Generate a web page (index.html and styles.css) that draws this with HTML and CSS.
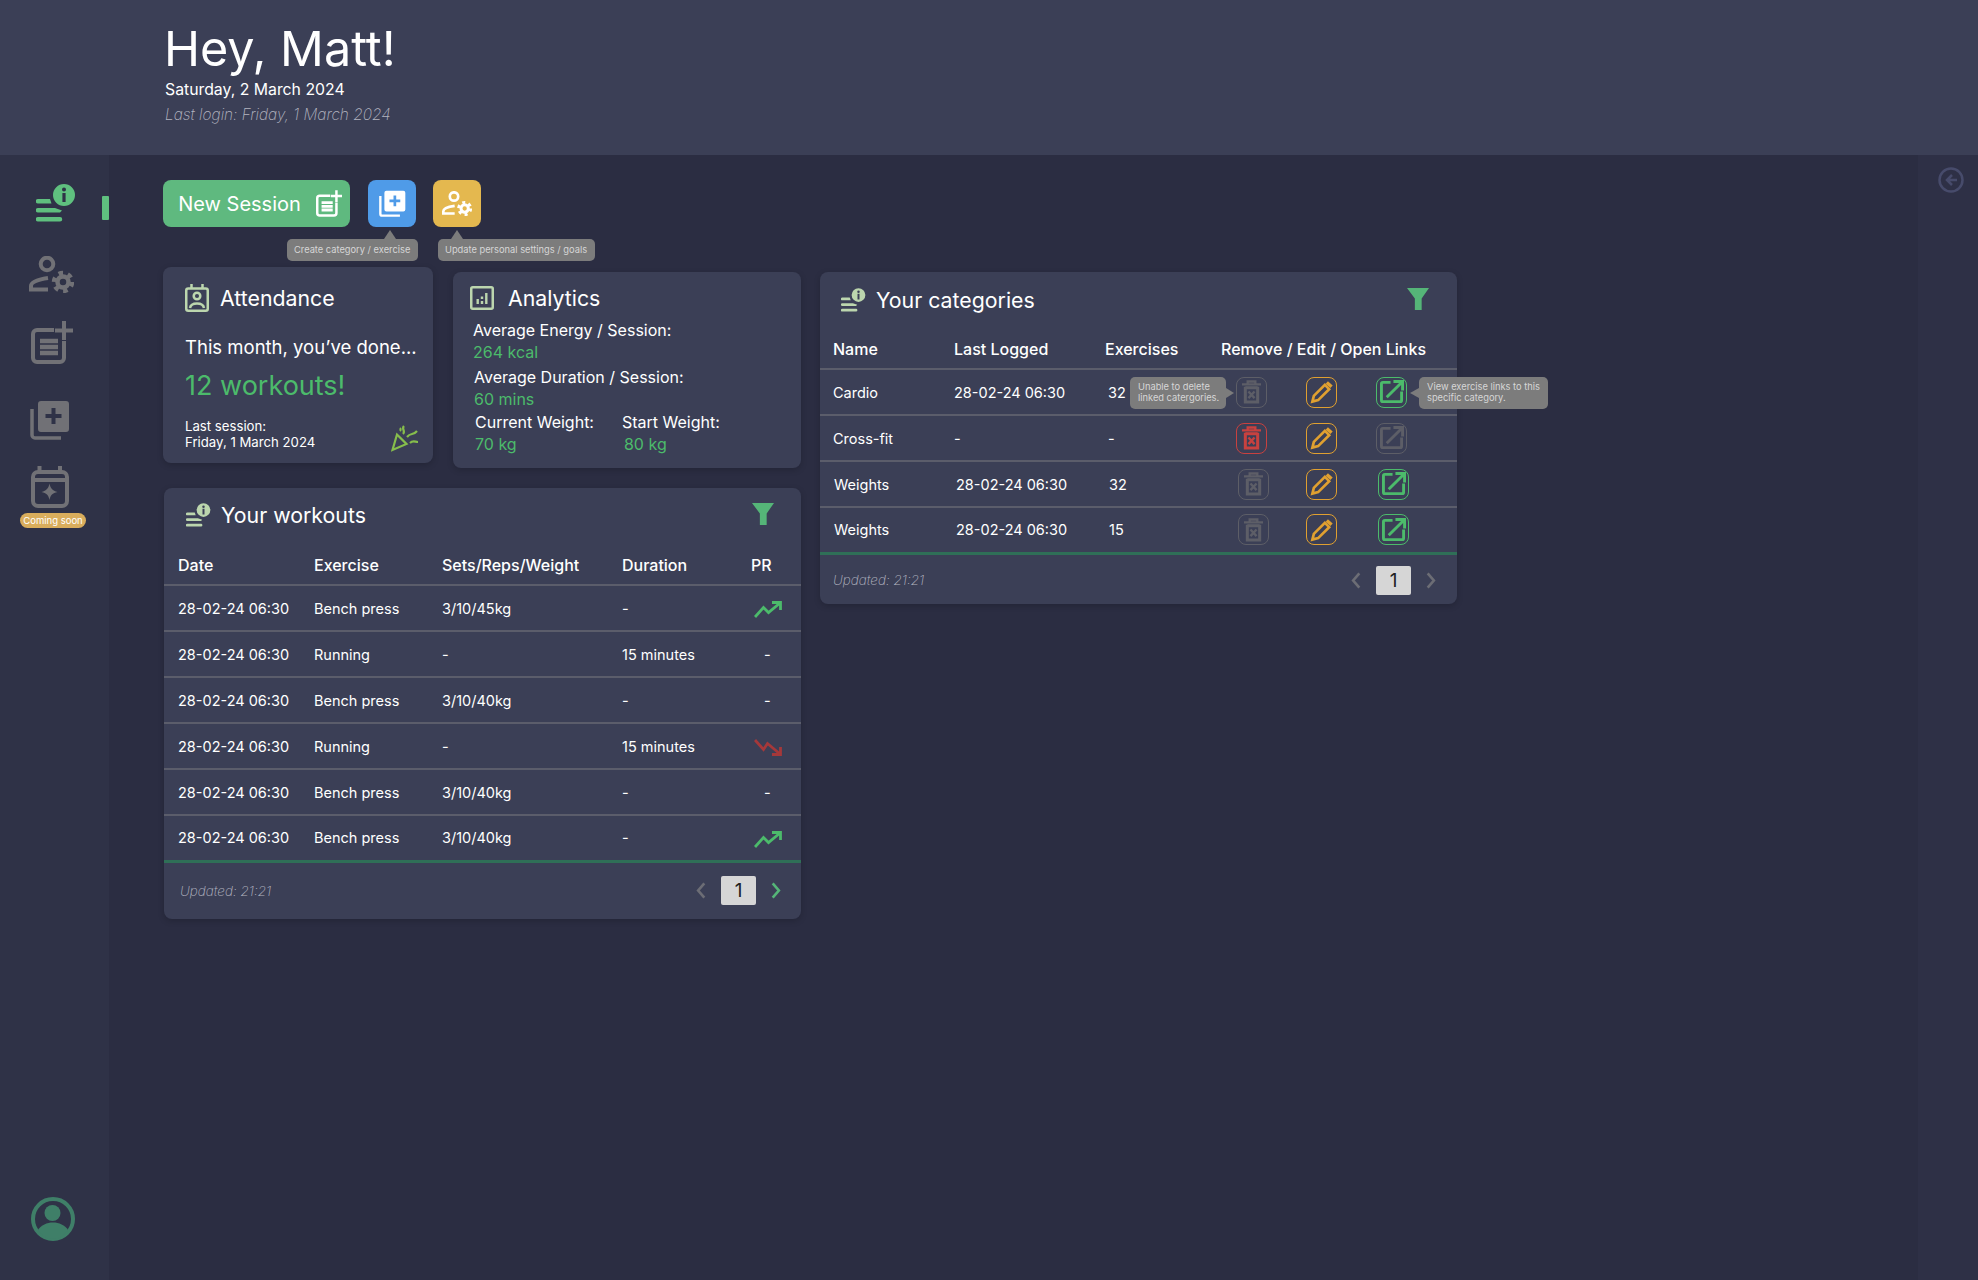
FILE: index.html
```html
<!DOCTYPE html>
<html lang="en">

<head>
  <meta charset="UTF-8">
  <meta name="viewport" content="width=device-width, initial-scale=1.0">
  <title>Dashboard</title>
  <link rel="stylesheet" href="styles.css">
</head>

<body>
  <!-- icon sprite -->
  <svg class="sprite" xmlns="http://www.w3.org/2000/svg">
    <symbol id="i-list" viewBox="0 0 40 38">
      <path fill="currentColor" fill-rule="evenodd" d="M28 0a11 11 0 1 1 0 22a11 11 0 0 1 0-22zM26.400 9v9h3.200V9zM28 3.600a2 2 0 1 0 0 4a2 2 0 0 0 0-4z"/>
      <path fill="currentColor" d="M2 15h12l1.500 4.500H2a2.250 2.250 0 0 1 0-4.500zM2 24h17l7 2.500l-2 2H2a2.250 2.250 0 0 1 0-4.500zM2 33h22a2 2 0 0 1 0 4.500H2a2.250 2.250 0 0 1 0-4.500z"/>
    </symbol>
    <symbol id="i-user-gear" viewBox="0 0 45 37">
      <g fill="none" stroke="currentColor">
        <circle cx="18" cy="8" r="6.300" stroke-width="4"/>
        <path stroke-width="4" d="M19 22C9 23.500 2 26 2 30v3.500h17"/>
        <circle cx="34" cy="26" r="5.500" stroke-width="4.500"/>
        <circle cx="34" cy="26" r="9" stroke-width="4.500" stroke-dasharray="4.500 4.920"/>
      </g>
    </symbol>
    <symbol id="i-note-plus" viewBox="0 0 42 43">
      <g fill="none" stroke="currentColor" stroke-width="4">
        <path d="M23 9H6a4 4 0 0 0-4 4v24a4 4 0 0 0 4 4h23a4 4 0 0 0 4-4V20"/>
        <path d="M33 0v19M24 9.500h18"/>
        <path stroke-width="4.500" d="M9 20h18M9 26h18M9 32h18"/>
      </g>
    </symbol>
    <symbol id="i-library" viewBox="0 0 40 40">
      <path fill="currentColor" fill-rule="evenodd" d="M11 1h25a3 3 0 0 1 3 3v25a3 3 0 0 1-3 3H11a3 3 0 0 1-3-3V4a3 3 0 0 1 3-3zM21.500 8v6h-6v4h6v6h4v-6h6v-4h-6V8z"/>
      <path fill="none" stroke="currentColor" stroke-width="3.500" d="M2 9v26a3 3 0 0 0 3 3h26"/>
    </symbol>
    <symbol id="i-calendar" viewBox="0 0 38 42">
      <g fill="none" stroke="currentColor" stroke-width="4">
        <rect x="2" y="6" width="34" height="34" rx="5"/>
        <path d="M2 14h34M8.500 0v6M29 0v6"/>
      </g>
      <path fill="currentColor" d="M18.500 17.500c1 5 3 7 8 8.500c-5 1-7 3-8 8c-1-5-3-7-8-8c5-1.500 7-3.500 8-8.500z"/>
    </symbol>
    <symbol id="i-avatar" viewBox="0 0 44 44">
      <circle cx="22" cy="22" r="20" fill="none" stroke="currentColor" stroke-width="4"/>
      <circle cx="21.500" cy="16" r="8" fill="currentColor"/>
      <path fill="currentColor" d="M7 33c3-5 9-7.500 15-7.500s12 2.500 15 7.500c-3 5-9 9-15 9s-12-4-15-9z"/>
    </symbol>
    <symbol id="i-back" viewBox="0 0 26 26">
      <circle cx="13" cy="13" r="11.500" fill="none" stroke="currentColor" stroke-width="2.500"/>
      <path fill="none" stroke="currentColor" stroke-width="2.500" d="M19 13h-9M14 8l-5 5l5 5"/>
    </symbol>
    <symbol id="i-attendance" viewBox="0 0 24 28">
      <g fill="none" stroke="currentColor" stroke-width="2.500">
        <rect x="1.250" y="4.500" width="21.500" height="22.250" rx="2"/>
        <path d="M6.500 0v4.500M17.500 0v4.500"/>
        <circle cx="12" cy="12" r="3.300"/>
        <path d="M5 24c1-6 13-6 14 0"/>
      </g>
    </symbol>
    <symbol id="i-analytics" viewBox="0 0 24 24">
      <rect x="1.250" y="1.250" width="21.500" height="21.500" rx="1.500" fill="none" stroke="currentColor" stroke-width="2.500"/>
      <path fill="currentColor" d="M6.500 13h2.400v5H6.500zM10.800 15h2.400v3h-2.400zM10.800 10.500h2.400v2.500h-2.400zM15.100 7h2.400v11h-2.400z"/>
    </symbol>
    <symbol id="i-party" viewBox="0 0 28 28">
      <g fill="none" stroke="currentColor" stroke-width="2.200">
        <path d="M1.500 26L6 10.500L15.500 20z"/>
        <path d="M12 10c3-3-2-5 1-8M16 13c4-5 6-1 10-6M19 19c3-3 5-1 8-1M9 7c1-1 0-2 1-3"/>
      </g>
    </symbol>
    <symbol id="i-funnel" viewBox="0 0 21 21">
      <path fill="currentColor" d="M0 0h21l-7 10v11H7.500V10z"/>
    </symbol>
    <symbol id="i-up" viewBox="0 0 28 17">
      <path fill="none" stroke="currentColor" stroke-width="2.800" d="M1 16l8.500-9.500l5 5L26 2M18 1.500h8.500V9"/>
    </symbol>
    <symbol id="i-down" viewBox="0 0 28 17">
      <path fill="none" stroke="currentColor" stroke-width="2.800" d="M1 1l8.500 9.500l4-6L26 15M18 15.500h8.500V8"/>
    </symbol>
    <symbol id="i-trash" viewBox="0 0 20 25">
      <g fill="none" stroke="currentColor">
        <path stroke-width="2.500" d="M0 4.500h20M6 4.500V1.500h8v3"/>
        <path stroke-width="3.200" d="M3.500 7v16h13V7"/>
        <path stroke-width="3.200" d="M3.500 8h13"/>
        <path stroke-width="2.500" d="M6.800 12l6.400 7M13.200 12l-6.400 7"/>
      </g>
    </symbol>
    <symbol id="i-pencil" viewBox="0 0 24 25">
      <g fill="none" stroke="currentColor">
        <path stroke-width="2.800" d="M2.500 22.500l1.500-6L15.500 5l4.500 4.500L8.500 21z"/>
        <path stroke-width="3.600" d="M17.500 2.500l5 4.500"/>
      </g>
    </symbol>
    <symbol id="i-link" viewBox="0 0 25 25">
      <g fill="none" stroke="currentColor" stroke-width="3">
        <path d="M11 2.500H3a1.500 1.500 0 0 0-1.500 1.500v17a1.500 1.500 0 0 0 1.500 1.500h18a1.500 1.500 0 0 0 1.500-1.500v-9"/>
        <path d="M7 18L22.500 2.500M14 1.500h9.500V11"/>
      </g>
    </symbol>
    <symbol id="i-prev" viewBox="0 0 10 18">
      <path fill="none" stroke="currentColor" stroke-width="2.800" d="M8.500 1.500L2 9l6.500 7.500"/>
    </symbol>
    <symbol id="i-next" viewBox="0 0 10 18">
      <path fill="none" stroke="currentColor" stroke-width="2.800" d="M1.500 1.500L8 9l-6.500 7.500"/>
    </symbol>
  </svg>

  <header class="top">
    <h1>Hey, Matt!</h1>
    <p class="date">Saturday, 2 March 2024</p>
    <p class="login">Last login: Friday, 1 March 2024</p>
  </header>

  <div class="layout">
    <aside class="sidebar">
      <span class="nav-mark"></span>
      <svg class="nav-icon nav-list"><use href="#i-list"/></svg>
      <svg class="nav-icon nav-settings"><use href="#i-user-gear"/></svg>
      <svg class="nav-icon nav-note"><use href="#i-note-plus"/></svg>
      <svg class="nav-icon nav-library"><use href="#i-library"/></svg>
      <svg class="nav-icon nav-calendar"><use href="#i-calendar"/></svg>
      <span class="soon">Coming soon</span>
      <svg class="nav-icon nav-avatar"><use href="#i-avatar"/></svg>
    </aside>

    <main class="content">
      <div class="actions">
        <button class="btn btn-green">New Session <svg class="btn-note"><use href="#i-note-plus"/></svg></button>
        <button class="btn btn-square btn-blue">
          <svg class="btn-lib"><use href="#i-library"/></svg>
          <span class="tip tip-create">Create category / exercise</span>
        </button>
        <button class="btn btn-square btn-yellow">
          <svg class="btn-gear"><use href="#i-user-gear"/></svg>
          <span class="tip tip-update">Update personal settings / goals</span>
        </button>
      </div>

      <div class="columns">
        <div class="left">
          <div class="stats">
            <section class="card attendance">
              <h2 class="card-title"><svg class="t-attendance"><use href="#i-attendance"/></svg>Attendance</h2>
              <p class="month">This month, you’ve done...</p>
              <p class="count">12 workouts!</p>
              <p class="last">Last session:<br>Friday, 1 March 2024</p>
              <svg class="party"><use href="#i-party"/></svg>
            </section>

            <section class="card analytics">
              <h2 class="card-title"><svg class="t-analytics"><use href="#i-analytics"/></svg>Analytics</h2>
              <div class="metric m1">Average Energy / Session:<span>264 kcal</span></div>
              <div class="metric m2">Average Duration / Session:<span>60 mins</span></div>
              <div class="weights">
                <div class="metric">Current Weight:<span>70 kg</span></div>
                <div class="metric">Start Weight:<span class="start">80 kg</span></div>
              </div>
            </section>
          </div>

          <section class="card panel workouts">
            <div class="panel-head">
              <h2 class="card-title"><svg class="t-list"><use href="#i-list"/></svg>Your workouts</h2>
              <svg class="funnel"><use href="#i-funnel"/></svg>
            </div>
            <table>
              <colgroup><col class="w1"><col class="w2"><col class="w3"><col class="w4"><col class="w5"></colgroup>
              <thead>
                <tr><th>Date</th><th>Exercise</th><th>Sets/Reps/Weight</th><th>Duration</th><th>PR</th></tr>
              </thead>
              <tbody>
                <tr><td>28-02-24 06:30</td><td>Bench press</td><td>3/10/45kg</td><td>-</td><td><svg class="trend up"><use href="#i-up"/></svg></td></tr>
                <tr><td>28-02-24 06:30</td><td>Running</td><td>-</td><td>15 minutes</td><td class="dash">-</td></tr>
                <tr><td>28-02-24 06:30</td><td>Bench press</td><td>3/10/40kg</td><td>-</td><td class="dash">-</td></tr>
                <tr><td>28-02-24 06:30</td><td>Running</td><td>-</td><td>15 minutes</td><td><svg class="trend down"><use href="#i-down"/></svg></td></tr>
                <tr><td>28-02-24 06:30</td><td>Bench press</td><td>3/10/40kg</td><td>-</td><td class="dash">-</td></tr>
                <tr><td>28-02-24 06:30</td><td>Bench press</td><td>3/10/40kg</td><td>-</td><td><svg class="trend up"><use href="#i-up"/></svg></td></tr>
              </tbody>
            </table>
            <div class="panel-foot">
              <span class="updated">Updated: 21:21</span>
              <div class="pager">
                <svg class="chev"><use href="#i-prev"/></svg>
                <span class="page">1</span>
                <svg class="chev live"><use href="#i-next"/></svg>
              </div>
            </div>
          </section>
        </div>

        <section class="card panel categories">
          <div class="panel-head">
            <h2 class="card-title"><svg class="t-list"><use href="#i-list"/></svg>Your categories</h2>
            <svg class="funnel"><use href="#i-funnel"/></svg>
          </div>
          <table>
            <colgroup><col class="c1"><col class="c2"><col class="c3"><col class="c4"><col class="c5"><col class="c6"></colgroup>
            <thead>
              <tr><th>Name</th><th>Last Logged</th><th>Exercises</th><th colspan="3">Remove / Edit / Open Links</th></tr>
            </thead>
            <tbody>
              <tr>
                <td>Cardio</td><td>28-02-24 06:30</td><td class="num">32</td>
                <td><span class="act off"><svg class="a-trash"><use href="#i-trash"/></svg><span class="tip tip-left">Unable to delete<br>linked catergories.</span></span></td>
                <td><span class="act edit"><svg class="a-pencil"><use href="#i-pencil"/></svg></span></td>
                <td><span class="act open"><svg class="a-link"><use href="#i-link"/></svg><span class="tip tip-right">View exercise links to this<br>specific category.</span></span></td>
              </tr>
              <tr>
                <td>Cross-fit</td><td>-</td><td class="num">-</td>
                <td><span class="act del"><svg class="a-trash"><use href="#i-trash"/></svg></span></td>
                <td><span class="act edit"><svg class="a-pencil"><use href="#i-pencil"/></svg></span></td>
                <td><span class="act off"><svg class="a-link"><use href="#i-link"/></svg></span></td>
              </tr>
              <tr class="nudge">
                <td>Weights</td><td>28-02-24 06:30</td><td class="num">32</td>
                <td><span class="act off"><svg class="a-trash"><use href="#i-trash"/></svg></span></td>
                <td><span class="act edit"><svg class="a-pencil"><use href="#i-pencil"/></svg></span></td>
                <td><span class="act open"><svg class="a-link"><use href="#i-link"/></svg></span></td>
              </tr>
              <tr class="nudge">
                <td>Weights</td><td>28-02-24 06:30</td><td class="num">15</td>
                <td><span class="act off"><svg class="a-trash"><use href="#i-trash"/></svg></span></td>
                <td><span class="act edit"><svg class="a-pencil"><use href="#i-pencil"/></svg></span></td>
                <td><span class="act open"><svg class="a-link"><use href="#i-link"/></svg></span></td>
              </tr>
            </tbody>
          </table>
          <div class="panel-foot">
            <span class="updated">Updated: 21:21</span>
            <div class="pager">
              <svg class="chev"><use href="#i-prev"/></svg>
              <span class="page">1</span>
              <svg class="chev"><use href="#i-next"/></svg>
            </div>
          </div>
        </section>
      </div>
    </main>

    <aside class="rightbar">
      <svg class="back"><use href="#i-back"/></svg>
    </aside>
  </div>
</body>

</html>
```

FILE: styles.css
```css
:root {
  --page-bg: #2b2d42;
  --side-bg: #2f3247;
  --card-bg: #3b3f56;
  --green: #4cbb6b;
  --pale: #bcd6ae;
  --line: #5b5d6b;
  --tip-bg: #7c7c7c;
  --tip-text: #d6d6d6;
  --grey-icon: #717176;
}

* {
  box-sizing: border-box;
}

body {
  margin: 0;
  background-color: var(--page-bg);
  color: #fff;
  font-family: Inter, "Liberation Sans", sans-serif;
}

p,
h1,
h2 {
  margin: 0;
  font-weight: 400;
}

svg {
  display: block;
  flex: none;
}

.sprite {
  display: none;
}

/* header */
.top {
  height: 155px;
  padding: 22px 0 0 164px;
  background-color: var(--card-bg);
}

.top h1 {
  font-size: 48.500px;
  line-height: 54px;
}

.date {
  font-size: 15.800px;
  line-height: 22px;
  margin: 3px 0 0 1px;
}

.login {
  margin: 2px 0 0 1px;
  font-size: 15.400px;
  line-height: 24px;
  font-style: italic;
  font-weight: 200;
  color: #b4b5c0;
}

.layout {
  display: flex;
  min-height: 1125px;
}

/* sidebar */
.sidebar {
  position: relative;
  width: 109px;
  flex: none;
  display: flex;
  flex-direction: column;
  padding: 29px 0 39px;
  background-color: var(--side-bg);
  color: var(--grey-icon);
}

.nav-mark {
  position: absolute;
  left: 102px;
  top: 41px;
  width: 7px;
  height: 24px;
  border-radius: 1px;
  background-color: #5fc07f;
}

.nav-list {
  width: 40px;
  height: 38px;
  margin-left: 36px;
  color: #5fc07f;
}

.nav-settings {
  width: 45px;
  height: 37px;
  margin: 34px 0 0 29px;
}

.nav-note {
  width: 42px;
  height: 43px;
  margin: 28px 0 0 31px;
}

.nav-library {
  width: 40px;
  height: 40px;
  margin: 36px 0 0 30px;
}

.nav-calendar {
  width: 38px;
  height: 42px;
  margin: 26px 0 0 31px;
}

.soon {
  width: 66px;
  height: 15px;
  margin: 5px 0 0 20px;
  border-radius: 8px;
  background-color: #d9ad5c;
  color: #fff;
  font-size: 9.500px;
  line-height: 15px;
  text-align: center;
}

.nav-avatar {
  width: 44px;
  height: 44px;
  margin: auto 0 0 31px;
  color: #3f7f68;
}

/* right strip */
.rightbar {
  width: 60px;
  flex: none;
  padding: 12px 0 0 20px;
  background-color: #2e3046;
}

.back {
  width: 26px;
  height: 26px;
  color: #474b6b;
}

/* main */
.content {
  flex: 1;
  padding: 25px 0 0 54px;
}

.actions {
  display: flex;
  height: 47px;
}

.btn {
  position: relative;
  display: flex;
  align-items: center;
  justify-content: center;
  height: 47px;
  border: none;
  border-radius: 8px;
  color: #fff;
  font-family: inherit;
}

.btn-green {
  width: 187px;
  gap: 15px;
  padding: 0 0 0 7px;
  background-color: #5fb97f;
  font-size: 20px;
}

.btn-note {
  width: 26px;
  height: 27px;
}

.btn-square {
  width: 48px;
  padding: 0;
}

.btn-blue {
  margin-left: 18px;
  background-color: #4f9be8;
}

.btn-lib {
  width: 27px;
  height: 27px;
}

.btn-yellow {
  margin-left: 17px;
  background-color: #e4b84f;
}

.btn-gear {
  width: 30px;
  height: 25px;
}

/* tooltips */
.tip {
  position: absolute;
  border-radius: 5px;
  background-color: var(--tip-bg);
  color: var(--tip-text);
  font-size: 9.300px;
  font-weight: 400;
  text-align: left;
  white-space: nowrap;
  z-index: 2;
}

.tip::before {
  content: "";
  position: absolute;
  width: 0;
  height: 0;
  border-style: solid;
  border-color: transparent;
}

.tip-create,
.tip-update {
  top: 59px;
  height: 22px;
  line-height: 22px;
  padding: 0 7px;
}

.tip-create {
  left: -81px;
  width: 131px;
}

.tip-update {
  left: 5px;
  width: 157px;
}

.tip-create::before,
.tip-update::before {
  top: -9px;
  border-width: 0 6px 9px;
  border-bottom-color: var(--tip-bg);
}

.tip-create::before {
  left: 97px;
}

.tip-update::before {
  left: 13px;
}

.tip-left,
.tip-right {
  top: -0.500px;
  height: 32px;
  padding: 5px 8px;
  line-height: 10.700px;
}

.tip-left {
  right: 40px;
  width: 96px;
}

.tip-right {
  left: 42px;
  width: 129px;
}

.tip-left::before {
  right: -8px;
  top: 11px;
  border-width: 5px 0 5px 8px;
  border-left-color: var(--tip-bg);
}

.tip-right::before {
  left: -9px;
  top: 11px;
  border-width: 5px 9px 5px 0;
  border-right-color: var(--tip-bg);
}

/* columns */
.columns {
  display: grid;
  grid-template-columns: 638px 637px;
  column-gap: 19px;
  margin-top: 40px;
  align-items: start;
}

.card {
  position: relative;
  border-radius: 8px;
  background-color: var(--card-bg);
  box-shadow: 0 2px 6px rgba(0, 0, 0, .18);
}

.card-title {
  display: flex;
  align-items: center;
  font-size: 21.300px;
  line-height: 28px;
  color: #fff;
}

.stats {
  display: flex;
  align-items: flex-start;
  gap: 20px;
}

.attendance {
  width: 270px;
  height: 196px;
  padding: 17px 0 0 22px;
}

.t-attendance {
  width: 24px;
  height: 28px;
  margin-right: 11px;
  color: var(--pale);
}

.month {
  margin-top: 23px;
  font-size: 18.500px;
  line-height: 24px;
}

.count {
  margin-top: 10px;
  font-size: 27px;
  line-height: 34px;
  color: var(--green);
}

.last {
  margin-top: 15px;
  font-size: 13.200px;
  line-height: 16px;
}

.party {
  position: absolute;
  left: 228px;
  top: 157px;
  width: 28px;
  height: 28px;
  color: #86bd4c;
}

.analytics {
  width: 348px;
  height: 196px;
  margin-top: 5px;
  padding: 12px 0 0 17px;
}

.t-analytics {
  width: 24px;
  height: 24px;
  margin-right: 14px;
  color: var(--pale);
}

.analytics .metric {
  position: relative;
  left: 3px;
}

.metric {
  font-size: 16px;
  line-height: 22px;
}

.metric span {
  display: block;
  color: var(--green);
}

.m1 {
  margin-top: 7px;
}

.m2 {
  margin: 3px 0 0 1px;
}

.weights {
  display: flex;
  gap: 28px;
  margin: 1px 0 0 2px;
}

.start {
  margin-left: 2px;
}

.panel.workouts {
  width: 637px;
  margin: 20px 0 0 1px;
}

.panel-head {
  display: flex;
  justify-content: space-between;
  align-items: flex-start;
  height: 51px;
  padding-top: 13px;
}

.workouts .card-title {
  padding-left: 22px;
}

.categories .card-title {
  padding-left: 21px;
}

.categories .panel-head {
  padding-top: 14px;
}

.t-list {
  width: 25px;
  height: 24px;
  margin-right: 10px;
  color: var(--pale);
}

.funnel {
  width: 22px;
  height: 22px;
  margin: 2px 27px 0 0;
  color: #55b578;
}

.categories .funnel {
  margin: 2px 28px 0 0;
}

.categories {
  margin-top: 5px;
  width: 637px;
}

/* tables */
table {
  width: 100%;
  border-collapse: collapse;
  table-layout: fixed;
  font-size: 14.500px;
}

th {
  height: 46px;
  padding: 6px 0 0;
  text-align: left;
  font-size: 16px;
  font-weight: 500;
  border-bottom: 2px solid var(--line);
}

td {
  height: 46px;
  padding: 0;
  border-bottom: 2px solid var(--line);
}

tbody tr:last-child td {
  border-bottom: 3px solid #2f6f57;
}

.w1 {
  width: 150px;
}

.w2 {
  width: 128px;
}

.w3 {
  width: 180px;
}

.w4 {
  width: 129px;
}

.w5 {
  width: 50px;
}

.workouts th:first-child,
.workouts td:first-child {
  padding-left: 14px;
}

.workouts td:last-child {
  padding-left: 3px;
}

.workouts td.dash {
  padding-left: 13px;
}

.trend {
  width: 28px;
  height: 17px;
  margin-top: 3px;
}

.trend.up {
  color: var(--green);
}

.trend.down {
  color: #a5383a;
}

.c1 {
  width: 134px;
}

.c2 {
  width: 151px;
}

.c3 {
  width: 116px;
}

.c4 {
  width: 70px;
}

.c5 {
  width: 70px;
}

.c6 {
  width: 96px;
}

.categories th:first-child,
.categories td:first-child {
  padding-left: 13px;
}

.categories td.num {
  padding-left: 3px;
}

.categories td:nth-child(4),
.categories td:nth-child(5),
.categories td:nth-child(6) {
  padding-left: 15px;
}

.categories .nudge td:nth-child(1) {
  padding-left: 14px;
}

.categories .nudge td:nth-child(2) {
  padding-left: 2px;
}

.categories .nudge td.num {
  padding-left: 4px;
}

.categories .nudge td:nth-child(4),
.categories .nudge td:nth-child(6) {
  padding-left: 17px;
}

.act {
  position: relative;
  display: flex;
  align-items: center;
  justify-content: center;
  width: 31px;
  height: 31px;
  border: 1.500px solid;
  border-radius: 8px;
}

.act.off {
  color: #5d5e67;
}

.act.edit {
  color: #e0a030;
}

.act.open {
  color: var(--green);
}

.act.del {
  color: #c8413f;
}

.a-trash {
  width: 19px;
  height: 24px;
}

.a-pencil {
  width: 23px;
  height: 24px;
}

.a-link {
  width: 24px;
  height: 24px;
}

/* footer */
.panel-foot {
  display: flex;
  justify-content: space-between;
  align-items: center;
  height: 56px;
  padding: 0 20px 0 16px;
}

.categories .panel-foot {
  height: 49px;
  padding: 2px 21px 0 13px;
}

.updated {
  font-size: 13.500px;
  font-style: italic;
  font-weight: 200;
  color: #b4b5c0;
}

.pager {
  display: flex;
  align-items: center;
  gap: 15px;
}

.chev {
  width: 10px;
  height: 17px;
  color: #6c6d75;
}

.chev.live {
  color: #55b578;
}

.page {
  width: 35px;
  height: 29px;
  background-color: #d6d6d6;
  border-radius: 2px;
  color: #222;
  font-size: 19px;
  line-height: 29px;
  text-align: center;
}
```
